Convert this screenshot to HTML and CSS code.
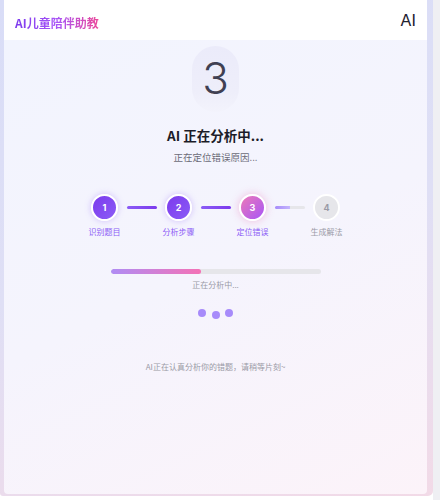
FILE: index.html
```html
<!DOCTYPE html>
<html lang="zh">
<head>
<meta charset="utf-8">
<link rel="stylesheet" href="styles.css">
</head>
<body>
<div class="page">
  <div class="frame">
    <div class="card">
      <header class="header">
        <span class="brand">AI儿童陪伴助教</span>
        <span class="avatar">AI</span>
      </header>
      <main class="main">
        <div class="count"><span>3</span></div>
        <h1 class="title">AI 正在分析中...</h1>
        <p class="subtitle">正在定位错误原因...</p>
        <div class="steps">
          <div class="step done"><div class="circle">1</div><div class="label">识别题目</div></div>
          <div class="conn"><div class="line full"></div></div>
          <div class="step done"><div class="circle">2</div><div class="label">分析步骤</div></div>
          <div class="conn"><div class="line full"></div></div>
          <div class="step active"><div class="circle">3</div><div class="label">定位错误</div></div>
          <div class="conn"><div class="line half"></div></div>
          <div class="step todo"><div class="circle">4</div><div class="label">生成解法</div></div>
        </div>
        <div class="progress"><div class="fill" style="width:43%"></div></div>
        <p class="ptext">正在分析中...</p>
        <div class="dots"><span class="dot"></span><span class="dot low"></span><span class="dot"></span></div>
        <p class="note">AI正在认真分析你的错题，请稍等片刻~</p>
      </main>
    </div>
  </div>
  <div class="scroll"></div>
</div>
</body>
</html>
```
FILE: styles.css
```css
* { box-sizing: border-box; margin: 0; padding: 0; }
html, body { width: 440px; height: 500px; overflow: hidden; background: #ffffff; }
body { font-family: "Noto Sans CJK SC", "Noto Sans", sans-serif; }
.page { display: flex; width: 440px; height: 500px; }
.frame {
  width: 433px; height: 496px;
  padding: 0 6px 2px 4px;
  background: linear-gradient(165deg, #d9ddf7 0%, #dfdff5 50%, #f2dae7 100%);
  border-bottom-right-radius: 5px;
  border-bottom-left-radius: 3px;
}
.scroll { width: 7px; height: 500px; background: #efeff3; }
.card { width: 423px; height: 494px; display: flex; flex-direction: column; border-radius: 0 0 4px 4px; overflow: hidden; }
.header {
  height: 40px; background: #ffffff;
  display: flex; align-items: center; justify-content: space-between;
  padding: 0 11px 0 11px;
}
.brand {
  font-size: 12px; font-weight: 700; margin-top: 5px;
  background: linear-gradient(90deg, #7c3aed, #a855f7 50%, #ec4899);
  -webkit-background-clip: text; background-clip: text; color: transparent;
}
.avatar { font-family: "Inter", "Noto Sans", sans-serif; font-size: 16.5px; color: #1f2230; }
.main {
  flex: 1;
  background: linear-gradient(155deg, #f2f4fe 0%, #f5f4fd 50%, #fcf3f9 100%);
  display: flex; flex-direction: column; align-items: center;
  padding-top: 6px;
}
.count {
  width: 47px; height: 66px; border-radius: 24px;
  background: linear-gradient(180deg, #ebebfa 0%, #eeeefa 70%, #f3f3fc 100%);
  display: flex; align-items: center; justify-content: center;
}
.count span { font-family: "Inter", "Noto Sans", sans-serif; font-weight: 300; font-size: 44px; line-height: 1; color: #404052; margin-top: -2px; }
.title { margin-top: 13px; font-size: 13.5px; font-weight: 700; color: #1c1c28; line-height: 20px; }
.subtitle { margin-top: 5px; font-size: 9.5px; color: #6b6b78; line-height: 14px; }
.steps { display: flex; margin-top: 30px; }
.step { width: 40px; display: flex; flex-direction: column; align-items: center; }
.circle {
  width: 27px; height: 27px; border-radius: 50%;
  border: 2px solid #ffffff;
  display: flex; align-items: center; justify-content: center;
  font-family: "Inter", "Noto Sans", sans-serif; font-size: 9px; font-weight: 700; color: #ffffff;
}
.done .circle { background: linear-gradient(135deg, #7c3aed, #8b5cf6); box-shadow: 0 0 6px rgba(139, 92, 246, 0.35); }
.active .circle { background: linear-gradient(135deg, #ec79b8, #a855f7); box-shadow: 0 0 8px rgba(236, 121, 184, 0.45); }
.todo .circle { background: #e6e6ea; color: #9a9aa6; }
.label { margin-top: 5px; font-size: 8px; line-height: 11px; color: #8b5cf6; white-space: nowrap; }
.todo .label { color: #9a9aa6; }
.conn { width: 34px; padding: 12px 2px 0; }
.line { height: 3px; border-radius: 2px; }
.line.full { background: linear-gradient(90deg, #8b5cf6, #7c3aed); }
.line.half { background: linear-gradient(90deg, #a78bfa 0%, #c4b5fd 50%, #e6e6ea 50%, #e6e6ea 100%); }
.progress { margin-top: 32px; width: 210px; height: 5px; border-radius: 3px; background: #e6e6ea; overflow: hidden; }
.fill { height: 100%; border-radius: 3px; background: linear-gradient(90deg, #b08cf4, #f472b6); }
.ptext { margin-top: 5px; font-size: 8px; line-height: 11px; color: #9a9aa6; }
.dots { display: flex; gap: 5.5px; margin-top: 19px; height: 12px; align-items: flex-start; }
.dot { width: 8px; height: 8px; border-radius: 50%; background: #a78bfa; }
.dot.low { margin-top: 2px; }
.note { margin-top: 40px; font-size: 8px; line-height: 11px; color: #9a9aa6; }
```
